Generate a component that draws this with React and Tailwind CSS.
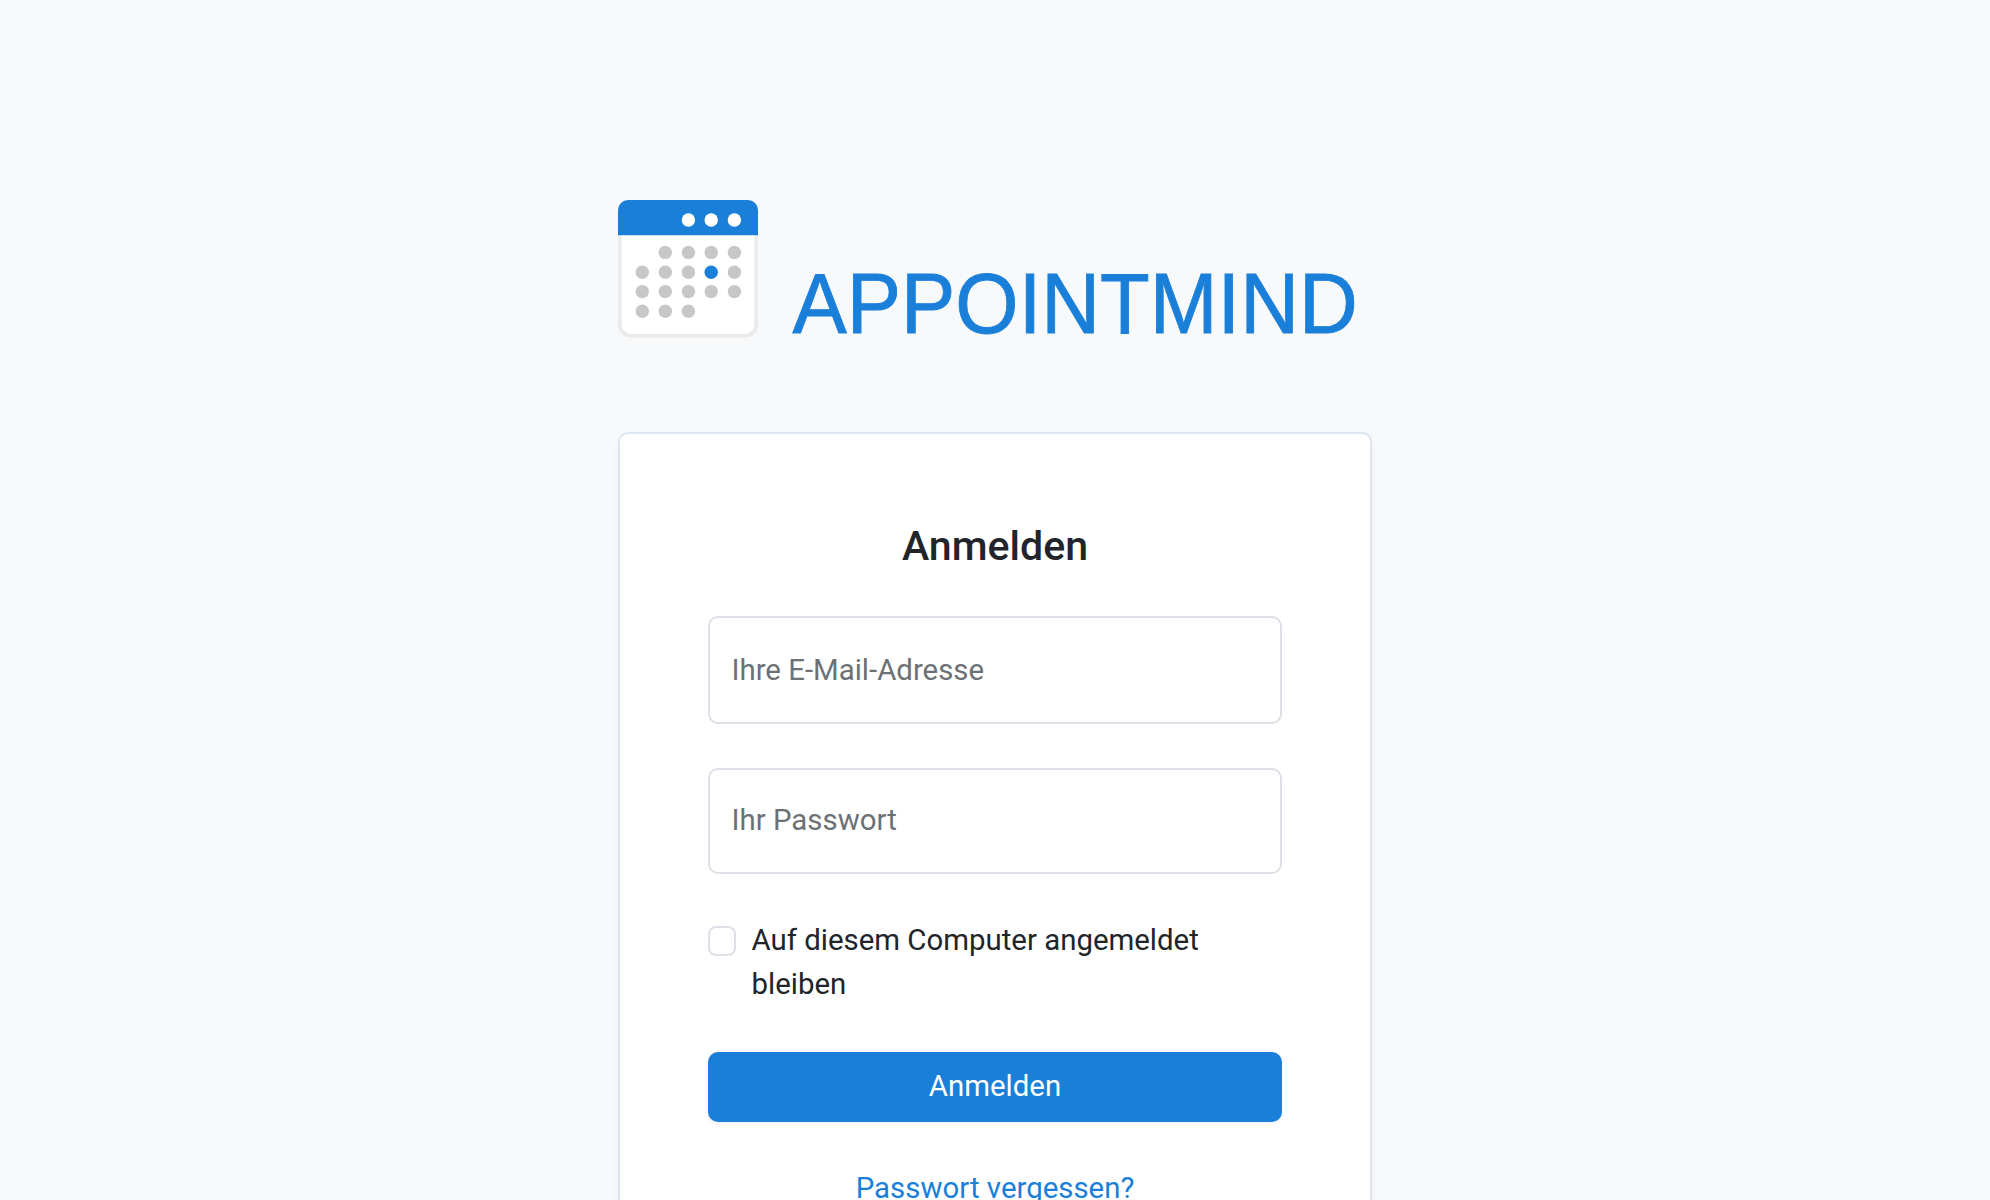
import React from "react";

const BLUE = "#1a7fd9";

const HEADER_DOTS = [70.4, 93.2, 116.4];

const DAY_ROWS = [
  { y: 52.4, days: [47.3, 70.4, 93.2, 116.4] },
  { y: 72.2, days: [24.3, 47.3, 70.4, 93.2, 116.4] },
  { y: 91.6, days: [24.3, 47.3, 70.4, 93.2, 116.4] },
  { y: 111.2, days: [24.3, 47.3, 70.4] },
];

function Logo() {
  return (
    <svg viewBox="0 0 754 160" className="block w-full h-[160px] overflow-visible" role="img" aria-label="Appointmind">
      {/* Calendar sheet */}
      <rect x="0" y="0" width="140" height="137.6" rx="12" fill="#ebebeb" />
      <path d="M3.6 34h132.8v90a10 10 0 0 1-10 10H13.6a10 10 0 0 1-10-10z" fill="#fff" />
      <path d="M0 35.2V10A10 10 0 0 1 10 0h120a10 10 0 0 1 10 10v25.2z" fill={BLUE} />
      {HEADER_DOTS.map((x) => (
        <circle key={x} cx={x} cy="20" r="6.7" fill="#fff" />
      ))}
      {DAY_ROWS.map((row) =>
        row.days.map((x) => (
          <circle key={`${row.y}-${x}`} cx={x} cy={row.y} r="6.7" fill={row.y === 72.2 && x === 93.2 ? BLUE : "#c7c7c7"} />
        ))
      )}
      <text
        x="174.5"
        y="132.7"
        textLength="565.2"
        lengthAdjust="spacingAndGlyphs"
        fill={BLUE}
        stroke={BLUE}
        strokeWidth="0.9"
        className="font-['Liberation_Sans',sans-serif] text-[85px]"
      >
        APPOINTMIND
      </text>
    </svg>
  );
}

export default function App() {
  return (
    <div className="h-[1200px] overflow-hidden bg-[#f8f9fb] pt-[200px] font-['Roboto',sans-serif] text-[29.4px] leading-[44px] text-[#212529]">
      <div className="w-[754px] mx-auto">
        <Logo />

        <main className="mt-[72px] h-[900px] rounded-[10px] border-2 border-[#dce5f1] bg-white px-[88px] pt-[88px] shadow-[0_4px_8px_rgba(24,36,51,0.04)]">
          <h1 className="text-center text-[41.1px] leading-[48px] font-medium">Anmelden</h1>

          <form className="mt-[46px]" onSubmit={(e) => e.preventDefault()}>
            <input
              type="email"
              placeholder="Ihre E-Mail-Adresse"
              className="block w-full h-[108px] rounded-[10px] border-2 border-[#dce1e7] bg-white px-[21.5px] placeholder:text-[#6c7175] outline-none"
            />
            <input
              type="password"
              placeholder="Ihr Passwort"
              className="mt-[44px] block w-full h-[106px] rounded-[10px] border-2 border-[#dce1e7] bg-white px-[21.5px] pb-0.5 placeholder:text-[#6c7175] outline-none"
            />

            <label className="mt-[44px] flex gap-[15.5px]">
              <input
                type="checkbox"
                className="mt-2 w-[28px] h-[30px] shrink-0 appearance-none rounded-[8px] border-2 border-[#dce1e7] bg-white"
              />
              <span>Auf diesem Computer angemeldet bleiben</span>
            </label>

            <button
              type="submit"
              className="mt-[46px] block w-full h-[70px] rounded-[10px] bg-[#1a7fd9] pb-0.5 text-white shadow-[0_2px_4px_rgba(24,36,51,0.06)]"
            >
              Anmelden
            </button>
          </form>

          <div className="mt-[44px] text-center">
            <a href="#" className="text-[#1a7fd9]">
              Passwort vergessen?
            </a>
          </div>
        </main>
      </div>
    </div>
  );
}
